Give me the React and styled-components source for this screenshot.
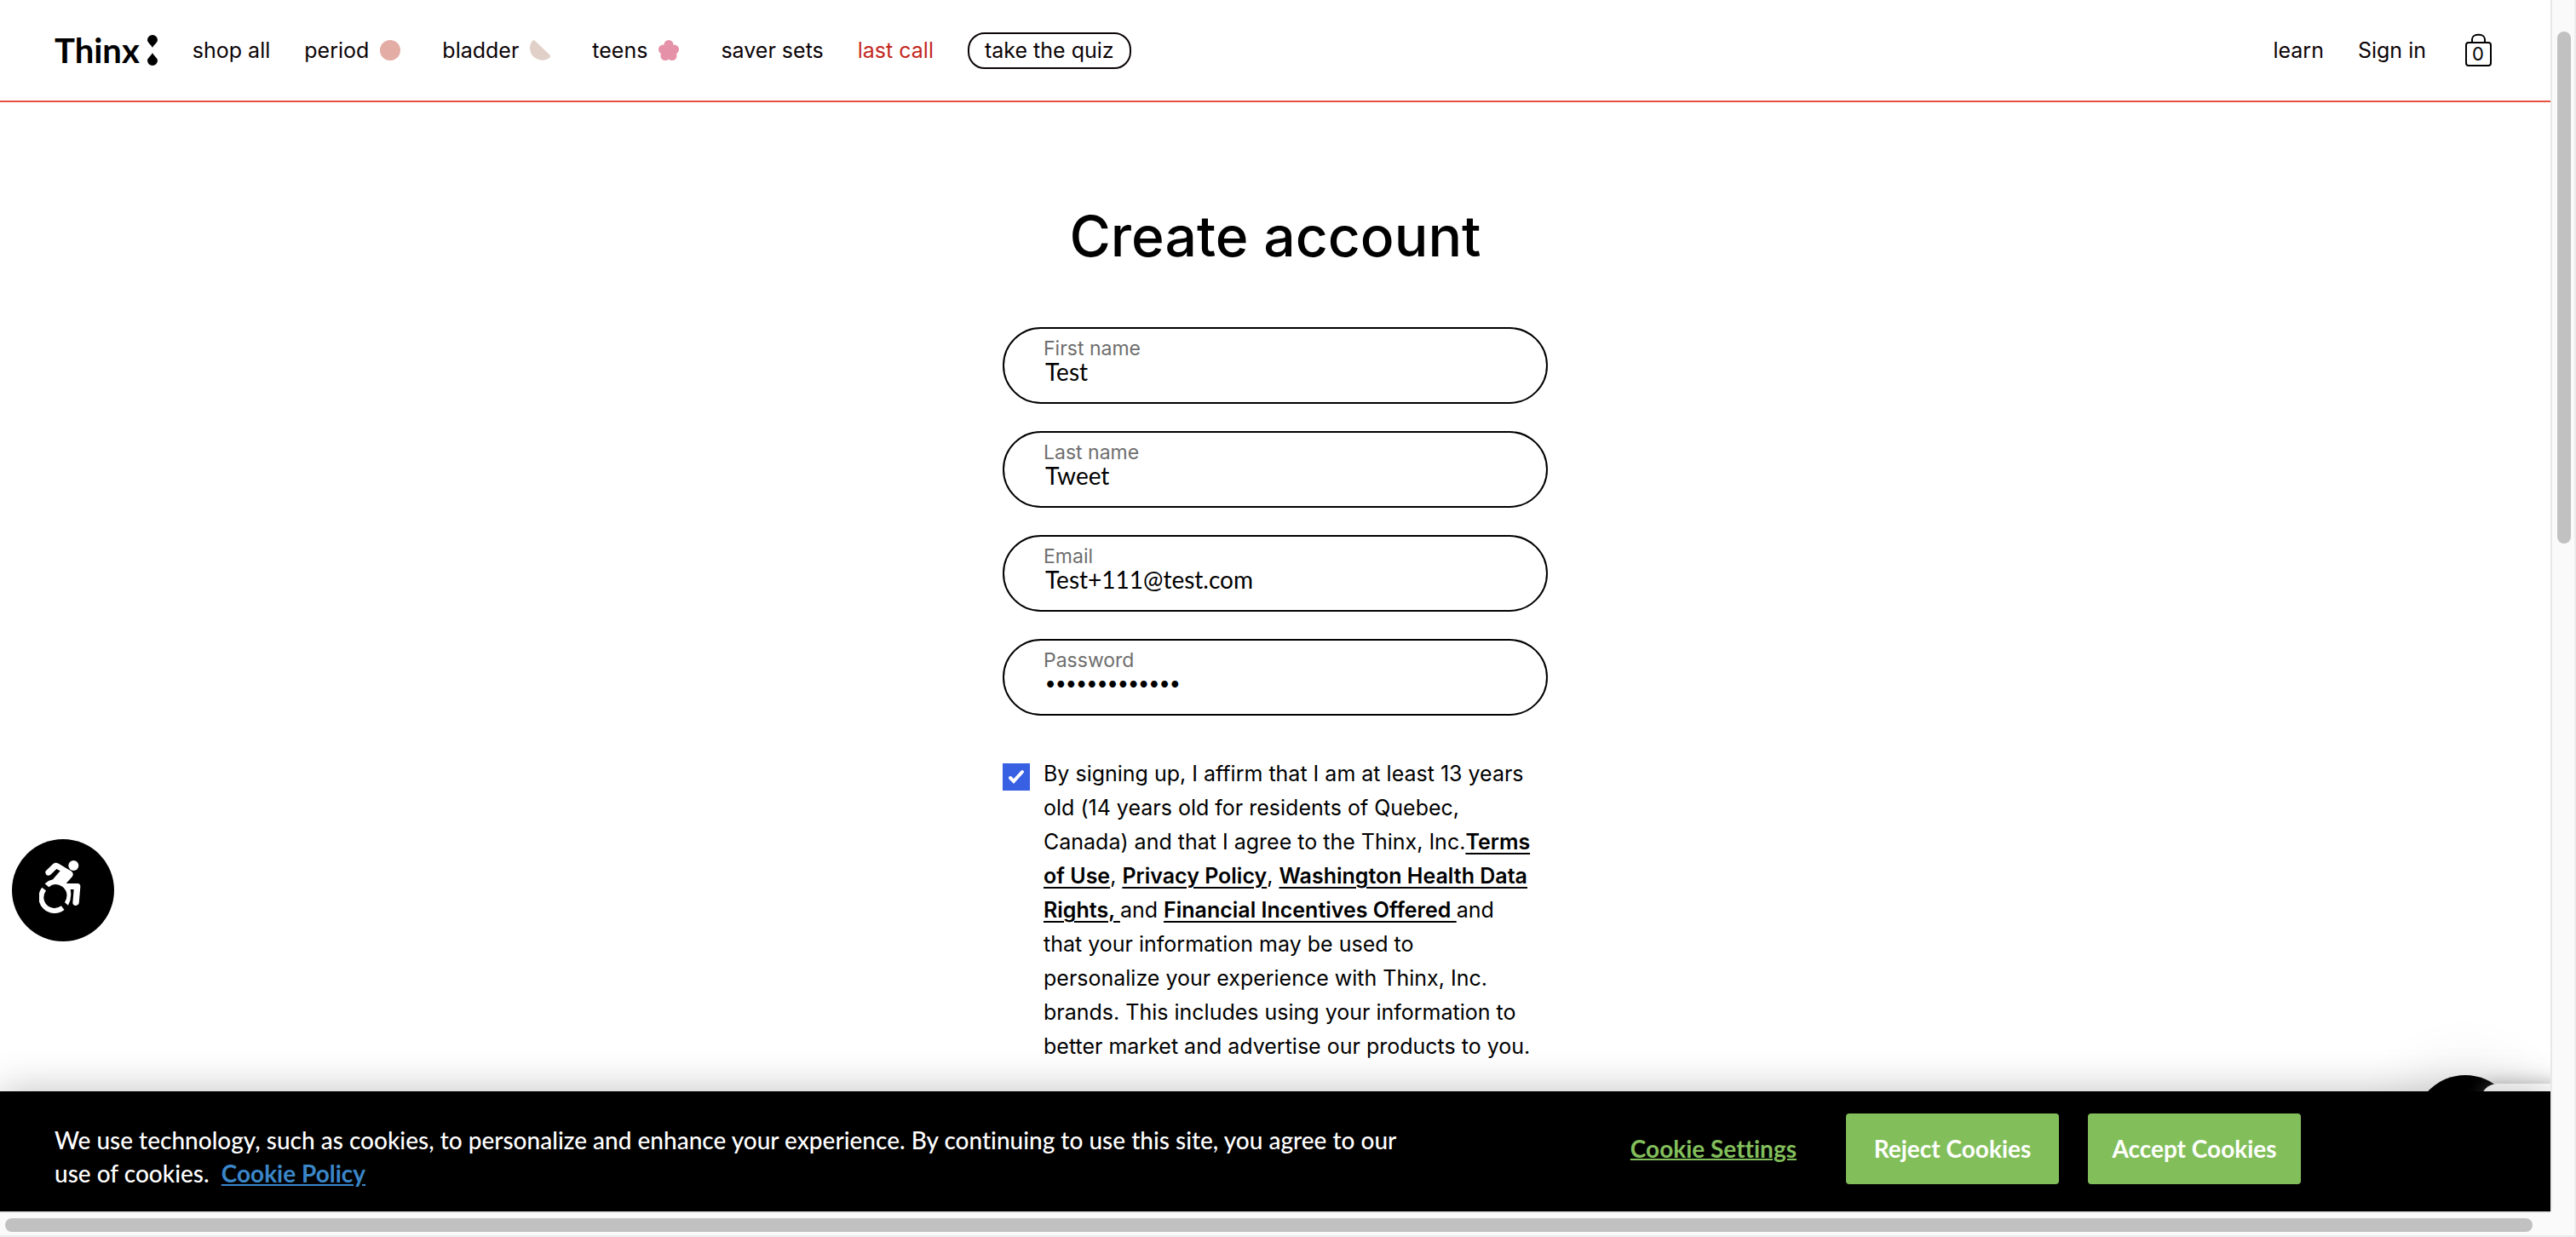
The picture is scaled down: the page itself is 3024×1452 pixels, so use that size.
import React from "react";
import styled, { createGlobalStyle } from "styled-components";

const GlobalStyle = createGlobalStyle`
  *, *::before, *::after { box-sizing: border-box; }
  body {
    margin: 0;
    background: #fff;
    color: #000;
    font-family: Inter, "Open Sans", sans-serif;
    font-variant-ligatures: none;
  }
  a { color: inherit; }
`;

const Browser = styled.div`
  display: grid;
  grid-template-columns: minmax(0, 1fr) 28px;
  grid-template-rows: minmax(0, 1fr) 28px;
  height: 100vh;
  overflow: hidden;
  background: #fafafa;
  border-right: 2px solid #ebebeb;
  border-bottom: 2px solid #ebebeb;
`;

const Page = styled.div`
  position: relative;
  overflow: hidden;
  background: #fff;
`;

const VerticalTrack = styled.div`
  padding: 37px 4px 0 6px;
  border-left: 2px solid #e8e8e8;
`;

const HorizontalTrack = styled.div`
  padding: 6px 21px 0 6px;
  border-top: 2px solid #e8e8e8;
`;

const Thumb = styled.div`
  width: ${(p) => p.$width};
  height: ${(p) => p.$height};
  border-radius: 8px;
  background: #c1c1c1;
`;

const Header = styled.header`
  display: flex;
  align-items: center;
  justify-content: space-between;
  height: 120px;
  padding: 0 64px;
  border-bottom: 2px solid #e8513f;
  font-size: 25px;
  line-height: 40px;
`;

const Nav = styled.nav`
  display: flex;
  align-items: center;
  gap: 40px;
`;

const Logo = styled.a`
  display: flex;
  align-items: center;
  gap: 8px;
  font: 700 40px/40px Lato, sans-serif;
  text-decoration: none;
`;

const NavLink = styled.a`
  display: flex;
  align-items: center;
  gap: 8px;
  color: ${(p) => (p.$sale ? "#c3281e" : "#0b0306")};
  text-decoration: none;
  white-space: nowrap;
`;

const QuizLink = styled(NavLink)`
  height: 43px;
  padding: 0 18px;
  border: 2px solid #0b0306;
  border-radius: 20px;
`;

const BagButton = styled.button`
  position: relative;
  display: grid;
  place-items: center;
  width: 42px;
  height: 40px;
  padding: 0;
  border: 0;
  background: none;
`;

const BagCount = styled.span`
  position: absolute;
  top: 12px;
  left: 0;
  right: 0;
  font: 400 22px/24px Inter, sans-serif;
  text-align: center;
`;

const Main = styled.main`
  display: flex;
  flex-direction: column;
  align-items: center;
  padding-top: 117px;
`;

const Title = styled.h1`
  margin: 0 0 67px;
  font-size: 66px;
  font-weight: 500;
  line-height: 80px;
`;

const Form = styled.form`
  display: flex;
  flex-direction: column;
  gap: 32px;
  width: 640px;
`;

const Field = styled.label`
  display: flex;
  flex-direction: column;
  height: 90px;
  padding: 11px 46px 0;
  border: 2px solid #000;
  border-radius: 45px;
`;

const FieldLabel = styled.span`
  color: #6e6e6e;
  font-size: 23px;
  line-height: 24px;
`;

const FieldInput = styled.input`
  height: 30px;
  padding: 0 2px;
  border: 0;
  outline: 0;
  background: none;
  color: #000;
  font-family: Lato, sans-serif;
  font-size: ${(p) => (p.type === "password" ? 21 : 28)}px;
  line-height: 30px;
`;

const Consent = styled.div`
  display: flex;
  align-items: flex-start;
  gap: 16px;
  margin-top: 16px;
`;

const Checkbox = styled.input`
  appearance: none;
  flex: none;
  width: 32px;
  height: 32px;
  margin: 8px 0 0;
  background: #3860e2
    url("data:image/svg+xml,%3Csvg xmlns='http://www.w3.org/2000/svg' viewBox='0 0 32 32'%3E%3Cpath d='M9 17l4 4 10-11' fill='none' stroke='white' stroke-width='4' stroke-linecap='round'/%3E%3C/svg%3E");
`;

const ConsentText = styled.label`
  font-size: 25px;
  line-height: 40px;
  white-space: nowrap;
`;

const PolicyLink = styled.a`
  font-weight: 600;
  text-decoration: underline;
  text-decoration-thickness: 2px;
  text-underline-offset: 4px;
`;

const AccessibilityButton = styled.button`
  position: absolute;
  top: 985px;
  left: 14px;
  width: 120px;
  height: 120px;
  padding: 0 6px 6px 0;
  border: 0;
  border-radius: 50%;
  background: #000;
`;

const ChatButton = styled.button`
  position: absolute;
  right: 40px;
  bottom: 40px;
  width: 120px;
  height: 120px;
  border: 0;
  border-radius: 50%;
  background: #000;
  box-shadow: 0 0 80px rgba(0, 0, 0, 0.12);
`;

const ChatPanel = styled.div`
  position: absolute;
  right: -20px;
  bottom: 40px;
  width: 102px;
  height: 110px;
  border-radius: 20px;
  background: #fff;
  box-shadow: 0 0 20px rgba(130, 130, 130, 0.5);
`;

const CookieBar = styled.section`
  position: absolute;
  right: 0;
  bottom: 0;
  left: 0;
  display: flex;
  align-items: flex-start;
  justify-content: space-between;
  padding: 26px 293px 25px 64px;
  background: #000;
  box-shadow: 0 0 48px rgba(0, 0, 0, 0.25);
  color: #fff;
  font: 500 28px/39px Lato, sans-serif;
  font-variant-ligatures: none;
`;

const CookieText = styled.p`
  margin: 12px 0 0;
  white-space: nowrap;
`;

const CookiePolicy = styled.a`
  color: #3a86c8;
  font-weight: 700;
`;

const CookieActions = styled.div`
  display: flex;
  align-items: center;
  gap: 34px;
`;

const SettingsButton = styled.button`
  margin-right: 24px;
  padding: 0;
  border: 0;
  background: none;
  color: #82bf5b;
  font: 700 28px/39px Lato, sans-serif;
  font-variant-ligatures: none;
  text-decoration: underline;
  text-decoration-thickness: 2px;
`;

const CookieButton = styled.button`
  width: 250px;
  height: 83px;
  padding: 0;
  border: 0;
  border-radius: 4px;
  background: #82bf5b;
  color: #fff;
  font: 700 28px/39px Lato, sans-serif;
`;

const LogoDrops = () => (
  <svg width="14" height="36" viewBox="0 0 14 36" aria-hidden="true">
    <path d="M7 0a6 6 0 0 1 6 6c0 3-4 5-6 9-2-4-6-6-6-9a6 6 0 0 1 6-6z" />
    <path d="M7 36a6 6 0 0 0 6-6c0-3-4-5-6-9-2 4-6 6-6 9a6 6 0 0 0 6 6z" />
  </svg>
);

const NavShape = ({ children, color }) => (
  <svg width="38" height="24" viewBox="0 0 38 24" fill={color} aria-hidden="true">
    {children}
  </svg>
);

const Bag = () => (
  <svg width="42" height="40" viewBox="0 0 42 40" fill="none" stroke="#000" strokeWidth="2" aria-hidden="true">
    <rect x="7" y="11" width="29" height="27" rx="3" />
    <path d="M14 11V7c0-7 15-7 15 0v4" />
  </svg>
);

const Wheelchair = () => (
  <svg width="50" height="66" viewBox="140 150 150 198" aria-hidden="true">
    <circle cx="261" cy="174" r="18" fill="#fff" />
    <path
      d="M164 192l25-24q8-6 17-2l48 28q9 8 3 18l-22 25h40q11 1 10 12l-5 58q-3 9-12 8-9-1-10-9l4-48h-12q6 30-8 56l-12-10q18-32-7-55-28-18-49 1l-14-12q12-12 28-15l26-30-13-7-21 20q-9 6-15 0-6-7-1-14z"
      fill="#fff"
    />
    <path d="M157 257a47 47 0 0 0 66 66" fill="none" stroke="#fff" strokeWidth="18" />
  </svg>
);

const fields = [
  { id: "first", label: "First name", type: "text", value: "Test" },
  { id: "last", label: "Last name", type: "text", value: "Tweet" },
  { id: "email", label: "Email", type: "email", value: "Test+111@test.com" },
  { id: "password", label: "Password", type: "password", value: "Testing123456" },
];

export default function App() {
  return (
    <Browser>
      <GlobalStyle />
      <Page>
        <Header>
          <Nav aria-label="Shop">
            <Logo href="#home">
              Thinx
              <LogoDrops />
            </Logo>
            <NavLink href="#all">shop all</NavLink>
            <NavLink href="#period">
              period
              <NavShape color="#e3ada5"><circle cx="17" cy="12" r="12" /></NavShape>
            </NavLink>
            <NavLink href="#bladder">
              bladder
              <NavShape color="#e0d0c8">
                <path d="M9 0Q5 4 5 9q0 9 8 13 8 4 15-1 2-2 0-4L11 1Q10 0 9 0z" />
              </NavShape>
            </NavLink>
            <NavLink href="#teens">
              teens
              <NavShape color="#e592a9">
                <circle cx="17" cy="5.5" r="5.5" />
                <circle cx="10.5" cy="11" r="5.5" />
                <circle cx="23.5" cy="11" r="5.5" />
                <circle cx="13" cy="18.5" r="5.5" />
                <circle cx="21" cy="18.5" r="5.5" />
                <circle cx="17" cy="12.5" r="7" />
              </NavShape>
            </NavLink>
            <NavLink href="#sets">saver sets</NavLink>
            <NavLink href="#last" $sale>last call</NavLink>
            <QuizLink href="#quiz">take the quiz</QuizLink>
          </Nav>
          <Nav aria-label="Account">
            <NavLink href="#learn">learn</NavLink>
            <NavLink href="#signin">Sign in</NavLink>
            <BagButton type="button" aria-label="Bag, 0 items">
              <Bag />
              <BagCount>0</BagCount>
            </BagButton>
          </Nav>
        </Header>

        <Main>
          <Title>Create account</Title>
          <Form>
            {fields.map((f) => (
              <Field key={f.id} htmlFor={f.id}>
                <FieldLabel>{f.label}</FieldLabel>
                <FieldInput id={f.id} type={f.type} defaultValue={f.value} />
              </Field>
            ))}
            <Consent>
              <Checkbox id="consent" type="checkbox" defaultChecked />
              <ConsentText htmlFor="consent">
                By signing up, I affirm that I am at least 13 years<br />
                old (14 years old for residents of Quebec,<br />
                Canada) and that I agree to the Thinx, Inc.
                <PolicyLink href="#terms">Terms<br />of Use</PolicyLink>,{" "}
                <PolicyLink href="#privacy">Privacy Policy</PolicyLink>,{" "}
                <PolicyLink href="#washington">Washington Health Data<br />Rights, </PolicyLink>
                and <PolicyLink href="#incentives">Financial Incentives Offered </PolicyLink>and<br />
                that your information may be used to<br />
                personalize your experience with Thinx, Inc.<br />
                brands. This includes using your information to<br />
                better market and advertise our products to you.
              </ConsentText>
            </Consent>
          </Form>
        </Main>

        <AccessibilityButton type="button" aria-label="Accessibility options">
          <Wheelchair />
        </AccessibilityButton>
        <ChatButton type="button" aria-label="Open chat" />
        <ChatPanel />

        <CookieBar aria-label="Cookies">
          <CookieText>
            We use technology, such as cookies, to personalize and enhance your experience. By continuing to use this
            site, you agree to our
            <br />
            use of cookies.&nbsp; <CookiePolicy href="#cookies">Cookie Policy</CookiePolicy>
          </CookieText>
          <CookieActions>
            <SettingsButton type="button">Cookie Settings</SettingsButton>
            <CookieButton type="button">Reject Cookies</CookieButton>
            <CookieButton type="button">Accept Cookies</CookieButton>
          </CookieActions>
        </CookieBar>
      </Page>
      <VerticalTrack>
        <Thumb $width="16px" $height="601px" />
      </VerticalTrack>
      <HorizontalTrack>
        <Thumb $width="100%" $height="16px" />
      </HorizontalTrack>
    </Browser>
  );
}
